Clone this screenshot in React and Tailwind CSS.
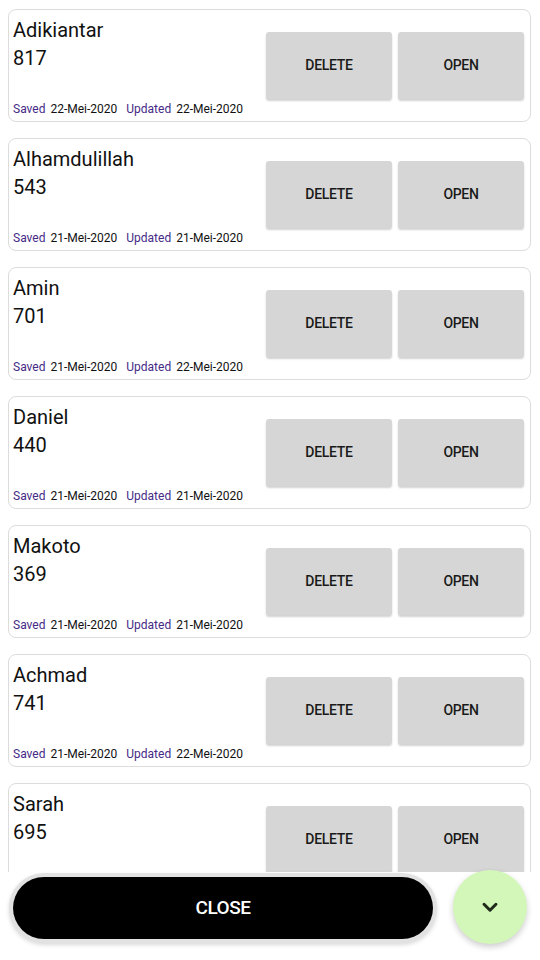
import React from "react";

const items = [
  { name: "Adikiantar", num: "817", saved: "22-Mei-2020", updated: "22-Mei-2020" },
  { name: "Alhamdulillah", num: "543", saved: "21-Mei-2020", updated: "21-Mei-2020" },
  { name: "Amin", num: "701", saved: "21-Mei-2020", updated: "22-Mei-2020" },
  { name: "Daniel", num: "440", saved: "21-Mei-2020", updated: "21-Mei-2020" },
  { name: "Makoto", num: "369", saved: "21-Mei-2020", updated: "21-Mei-2020" },
  { name: "Achmad", num: "741", saved: "21-Mei-2020", updated: "22-Mei-2020" },
  { name: "Sarah", num: "695", saved: "21-Mei-2020", updated: "21-Mei-2020" },
];

function Card({ it }) {
  return (
    <div className="h-[113px] shrink-0 rounded-[8px] border-[1.5px] border-[#dcdcdc] bg-white flex items-center pl-[4px] pr-[6px]">
      <div className="flex-1 h-full flex flex-col pt-[6px] pb-[4px]">
        <div className="text-[20px] leading-[28px] text-[#111]">{it.name}</div>
        <div className="text-[20px] leading-[29px] text-[#111]">{it.num}</div>
        <div className="mt-auto flex text-[12px] leading-[16px] whitespace-nowrap">
          <span className="text-[#452a86]">Saved</span>
          <span className="ml-[5px] text-[#111]">{it.saved}</span>
          <span className="ml-[9px] text-[#452a86]">Updated</span>
          <span className="ml-[5px] text-[#111]">{it.updated}</span>
        </div>
      </div>
      <div className="flex gap-[6px]">
        <button className="w-[126px] h-[67px] rounded-[3px] bg-[#d6d6d6] shadow-[0_2px_2px_rgba(0,0,0,0.18)] text-[14px] font-medium text-[#1a1a1a] tracking-[-0.3px]">
          DELETE
        </button>
        <button className="w-[126px] h-[67px] rounded-[3px] bg-[#d6d6d6] shadow-[0_2px_2px_rgba(0,0,0,0.18)] text-[14px] font-medium text-[#1a1a1a] tracking-[-0.3px]">
          OPEN
        </button>
      </div>
    </div>
  );
}

export default function App() {
  return (
    <div className="w-[540px] h-[960px] bg-white flex flex-col font-['Roboto',sans-serif] overflow-hidden">
      <div className="h-[872px] overflow-hidden shrink-0">
        <div className="flex flex-col gap-[16px] pt-[9px] pl-[8px] pr-[9px]">
          {items.map((it) => (
            <Card key={it.name} it={it} />
          ))}
        </div>
      </div>
      <div className="flex-1 flex items-start pt-[1px] pl-[9px]">
        <div className="w-[428px] h-[70px] rounded-full bg-[#e2e2e2] p-[4px] shadow-[0_2px_4px_rgba(0,0,0,0.15)]">
          <button className="w-full h-full rounded-full bg-black text-white text-[19px] font-medium tracking-[-0.5px]">
            CLOSE
          </button>
        </div>
        <div className="ml-[16px] -mt-[3px] w-[74px] h-[74px] rounded-full bg-[#d3f7b9] flex items-center justify-center shadow-[0_3px_6px_rgba(0,0,0,0.2)]">
          <svg width="26" height="26" viewBox="0 0 24 24" fill="none" stroke="#1f2a1a" strokeWidth="2.8" strokeLinecap="round" strokeLinejoin="round">
            <path d="M6.5 9.5l5.5 5.5 5.5-5.5" />
          </svg>
        </div>
      </div>
    </div>
  );
}
